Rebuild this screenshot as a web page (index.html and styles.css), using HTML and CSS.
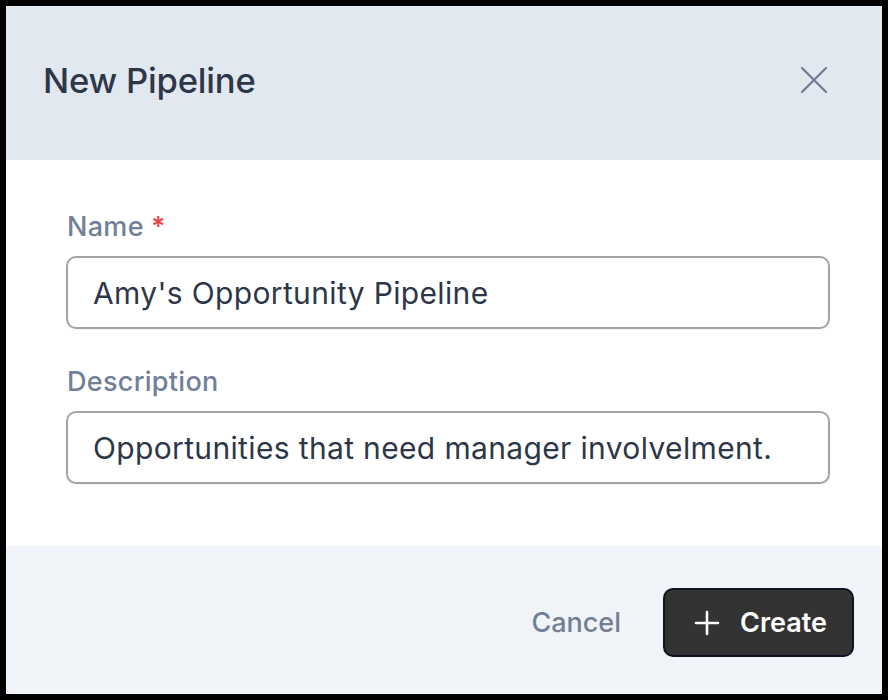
FILE: index.html
```html
<!DOCTYPE html>
<html lang="en">
<head>
<meta charset="utf-8">
<title>New Pipeline</title>
<link rel="stylesheet" href="styles.css">
</head>
<body>
<div class="dialog">
  <header class="dialog-header">
    <h1 class="dialog-title">New Pipeline</h1>
    <button class="close-btn" aria-label="Close">
      <svg width="28" height="28" viewBox="0 0 28 28" fill="none" stroke="currentColor" stroke-width="2.4" stroke-linecap="round"><path d="M2 2 L26 26 M26 2 L2 26"/></svg>
    </button>
  </header>
  <main class="dialog-body">
    <div class="field">
      <label class="field-label">Name <span class="required">*</span></label>
      <div class="input">Amy's Opportunity Pipeline</div>
    </div>
    <div class="field">
      <label class="field-label">Description</label>
      <div class="input">Opportunities that need manager involvelment.</div>
    </div>
  </main>
  <footer class="dialog-footer">
    <button class="btn-cancel">Cancel</button>
    <button class="btn-create">
      <svg width="26" height="26" viewBox="0 0 26 26" fill="none" stroke="currentColor" stroke-width="2.6" stroke-linecap="round"><path d="M13 2 V24 M2 13 H24"/></svg>
      <span>Create</span>
    </button>
  </footer>
</div>
</body>
</html>
```

FILE: styles.css
```css
* { box-sizing: border-box; }
html, body { margin: 0; height: 100%; }
body {
  background: #000;
  padding: 6px;
  font-family: Inter, "Noto Sans", "Liberation Sans", sans-serif;
}
.dialog {
  width: 876px;
  height: 688px;
  display: flex;
  flex-direction: column;
  background: #fff;
  overflow: hidden;
}
.dialog-header {
  height: 154px;
  flex: none;
  background: #e2e8f0;
  display: flex;
  align-items: center;
  justify-content: space-between;
  padding: 0 54px 6px 37px;
}
.dialog-title {
  margin: 0;
  font-size: 34.6px;
  font-weight: 500;
  color: #2d3748;
  letter-spacing: -0.2px;
}
.close-btn {
  border: 0;
  background: none;
  padding: 0;
  color: #718096;
  display: flex;
}
.dialog-body {
  flex: 1;
  padding: 48px 52px 0 60px;
  display: flex;
  flex-direction: column;
  gap: 34px;
}
.field { display: flex; flex-direction: column; gap: 10px; }
.field-label {
  font-size: 27px;
  font-weight: 500;
  color: #718096;
  line-height: 38px;
  letter-spacing: 0.3px;
  padding-left: 1px;
}
.required { color: #e53e3e; }
.input {
  height: 73px;
  border: 2px solid #a3a3a3;
  border-radius: 10px;
  padding: 0 25px;
  display: flex;
  align-items: center;
  font-size: 30px;
  letter-spacing: 0.35px;
  color: #2d3748;
  box-shadow: 0 1px 2px rgba(0,0,0,0.06);
}
.dialog-footer {
  height: 147px;
  flex: none;
  background: #f0f4f8;
  box-shadow: 0 -1px 2px rgba(0,0,0,0.06);
  display: flex;
  align-items: center;
  justify-content: flex-end;
  gap: 42px;
  padding: 4px 28px 0 0;
}
.btn-cancel {
  border: 0;
  background: none;
  padding: 0;
  font-family: inherit;
  font-size: 27px;
  font-weight: 500;
  color: #718096;
}
.btn-create {
  height: 69px;
  width: 191px;
  border: 2px solid #0f1222;
  border-radius: 10px;
  background: #333333;
  color: #fff;
  font-family: inherit;
  font-size: 27px;
  font-weight: 600;
  display: flex;
  align-items: center;
  justify-content: center;
  gap: 20px;
  padding: 0 0 0 4px;
}
```
